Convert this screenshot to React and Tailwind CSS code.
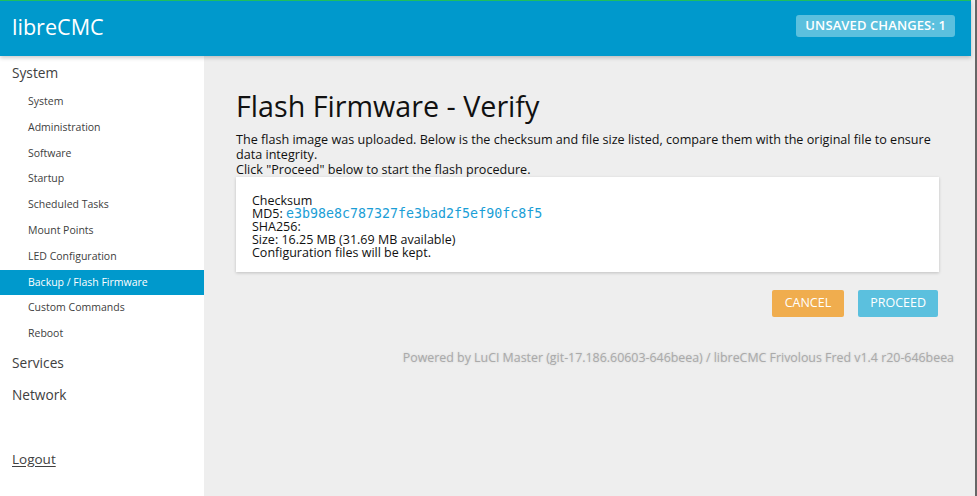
import React from "react";

const items = [
  "System",
  "Administration",
  "Software",
  "Startup",
  "Scheduled Tasks",
  "Mount Points",
  "LED Configuration",
  "Backup / Flash Firmware",
  "Custom Commands",
  "Reboot",
];

export default function App() {
  return (
    <div className="flex h-[496px] w-[977px] overflow-hidden bg-[#ededed]" style={{ fontFamily: '"Open Sans", "Noto Sans", sans-serif' }}>
      <div className="relative flex h-full w-[971px] flex-col">
        <header className="relative z-10 flex h-[56px] shrink-0 items-start justify-between border-t border-[#1fbf5f] bg-[#0099cc] pl-[12px] pr-[16px] shadow-[0_2px_4px_rgba(0,0,0,0.2)]">
          <div className="mt-[12px] text-[21.6px] leading-[28px] text-white">libreCMC</div>
          <div className="mt-[14px] flex h-[22px] items-center rounded-[3px] bg-[#5bc0de] px-[9px] text-[13px] font-semibold uppercase tracking-[0.1px] text-white">
            Unsaved Changes: 1
          </div>
        </header>
        <div className="flex min-h-0 flex-1">
          <nav className="w-[204px] shrink-0 bg-white text-[#404040]">
            <div className="flex h-[33px] items-center pl-[12px] pt-[1px] text-[13.7px]">System</div>
            {items.map((it) => (
              <div
                key={it}
                className={
                  "flex h-[25.8px] items-center pl-[28px] text-[10.5px] " +
                  (it === "Backup / Flash Firmware" ? "bg-[#0099cc] text-white" : "")
                }
              >
                {it}
              </div>
            ))}
            <div className="flex h-[32px] items-center pl-[12px] text-[13.7px]">Services</div>
            <div className="flex h-[32px] items-center pl-[12px] text-[13.7px]">Network</div>
            <div className="mt-[32px] flex h-[32px] items-center pl-[12px] text-[13.5px]">
              <span className="underline underline-offset-2">Logout</span>
            </div>
          </nav>
          <main className="flex-1 bg-[#eeeeee] pl-[32px] pr-[17px] pt-[32px]">
            <h1 className="text-[28.7px] leading-[36px] text-[#111]">Flash Firmware - Verify</h1>
            <div className="mr-[15px] mt-[7.5px] text-[12.6px] leading-[15px] text-[#111]">
              <p>
                The flash image was uploaded. Below is the checksum and file size listed, compare them with the original file to ensure data integrity.
                <br />
                Click "Proceed" below to start the flash procedure.
              </p>
            </div>
            <div className="mr-[15px] bg-white px-[16px] pb-[13px] pt-[17px] text-[12.5px] leading-[13px] text-[#111] shadow-[0_1px_3px_rgba(0,0,0,0.2)]">
              <div>Checksum</div>
              <div>
                MD5: <span className="text-[#1a9ed6]" style={{ fontFamily: '"DejaVu Sans Mono", monospace', fontSize: "13.3px" }}>e3b98e8c787327fe3bad2f5ef90fc8f5</span>
              </div>
              <div>SHA256:</div>
              <div>Size: 16.25 MB (31.69 MB available)</div>
              <div>Configuration files will be kept.</div>
            </div>
            <div className="mr-[16px] mt-[18px] flex justify-end gap-[14px]">
              <button className="h-[27px] rounded-[2px] bg-[#f0ad4e] px-[13px] text-[12.5px] uppercase text-white">Cancel</button>
              <button className="h-[27px] rounded-[2px] bg-[#5bc0de] px-[12px] text-[12.5px] uppercase text-white">Proceed</button>
            </div>
            <div className="mt-[32px] text-right text-[12.4px] leading-[17px] text-[#aaaaaa] [text-shadow:0_0_2px_#ccc]">
              Powered by LuCI Master (git-17.186.60603-646beea) / libreCMC Frivolous Fred v1.4 r20-646beea
            </div>
          </main>
        </div>
      </div>
      <div className="h-full w-[4px] bg-[#ededed]" />
      <div className="h-full w-[2px] bg-[#666]" />
    </div>
  );
}
